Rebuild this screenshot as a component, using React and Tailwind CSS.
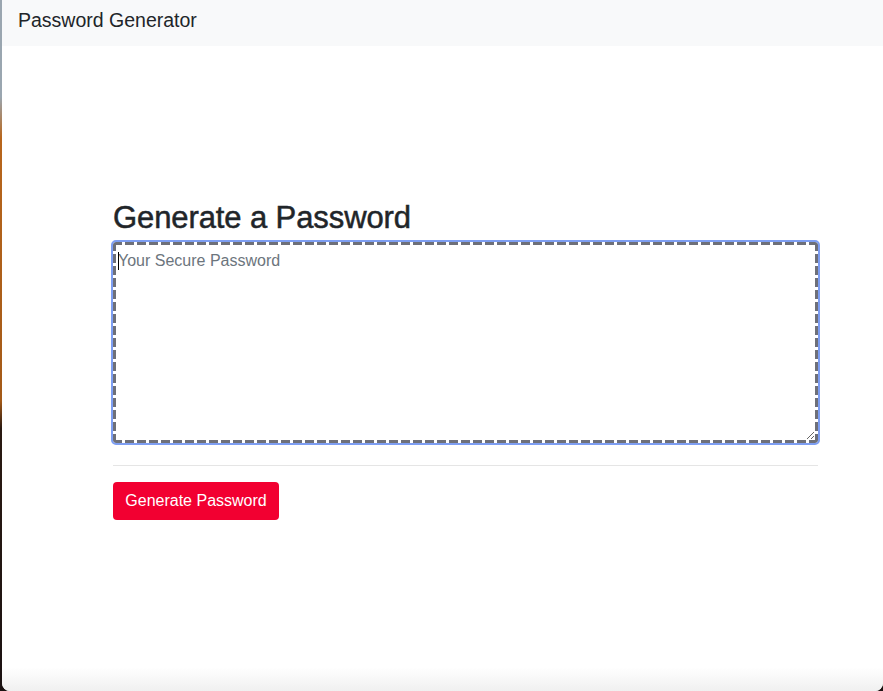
import React from "react";

const App = () => {
  return (
    <div className="flex h-[691px] w-full bg-[#1b1212] font-['Liberation_Sans',Arial,sans-serif] text-[#212529]">
      {/* desktop edge behind the window */}
      <div className="w-[2px] bg-[linear-gradient(to_bottom,#9aa6b0_0%,#9aa6b0_14%,#b8661c_20%,#a45a18_58%,#2a1a12_62%,#1b1212_100%)]" />

      <div className="flex flex-1 flex-col overflow-hidden rounded-b-[8px] bg-white">
        {/* Navbar */}
        <nav className="flex h-[46px] items-center bg-[#f8f9fa] pb-[4px] pl-[16px]">
          <span className="text-[19.5px] leading-none">Password Generator</span>
        </nav>

        {/* Main */}
        <main className="ml-[111px] w-[705px] pt-[153px]">
          <h2 className="mb-[6px] text-[31px] leading-[37px] tracking-[-0.1px] [-webkit-text-stroke:0.5px_#212529]">
            Generate a Password
          </h2>

          {/* dashed focus box */}
          <div className="relative rounded-[3px] bg-[repeating-linear-gradient(90deg,#6e7079_0_9px,transparent_9px_12px),repeating-linear-gradient(90deg,#6e7079_0_9px,transparent_9px_12px),repeating-linear-gradient(180deg,#6e7079_0_9px,transparent_9px_12px),repeating-linear-gradient(180deg,#6e7079_0_9px,transparent_9px_12px)] bg-[length:100%_3px,100%_3px,3px_100%,3px_100%] bg-[position:top,bottom,left,right] bg-no-repeat p-[3px] outline-2 outline-[#7d9ef2]">
            <textarea
              readOnly
              placeholder="Your Secure Password"
              className="block h-[195px] w-full resize-y bg-white px-[2px] pt-[6px] text-[16px] leading-[20px] text-[#495057] outline-none placeholder:text-[#6c757d]"
            />
            <span className="absolute left-[5px] top-[10px] h-[18px] w-px bg-black" />
          </div>

          <hr className="mt-[22px] border-t border-[#e5e5e5]" />

          <button className="mt-[16px] h-[38px] w-[166px] rounded-[4px] bg-[#f20031] text-[16px] text-white">
            Generate Password
          </button>
        </main>

        <div className="flex-1" />
        <div className="h-[24px] bg-linear-to-b from-white to-[#f0f0f0]" />
      </div>
    </div>
  );
};

export default App;
